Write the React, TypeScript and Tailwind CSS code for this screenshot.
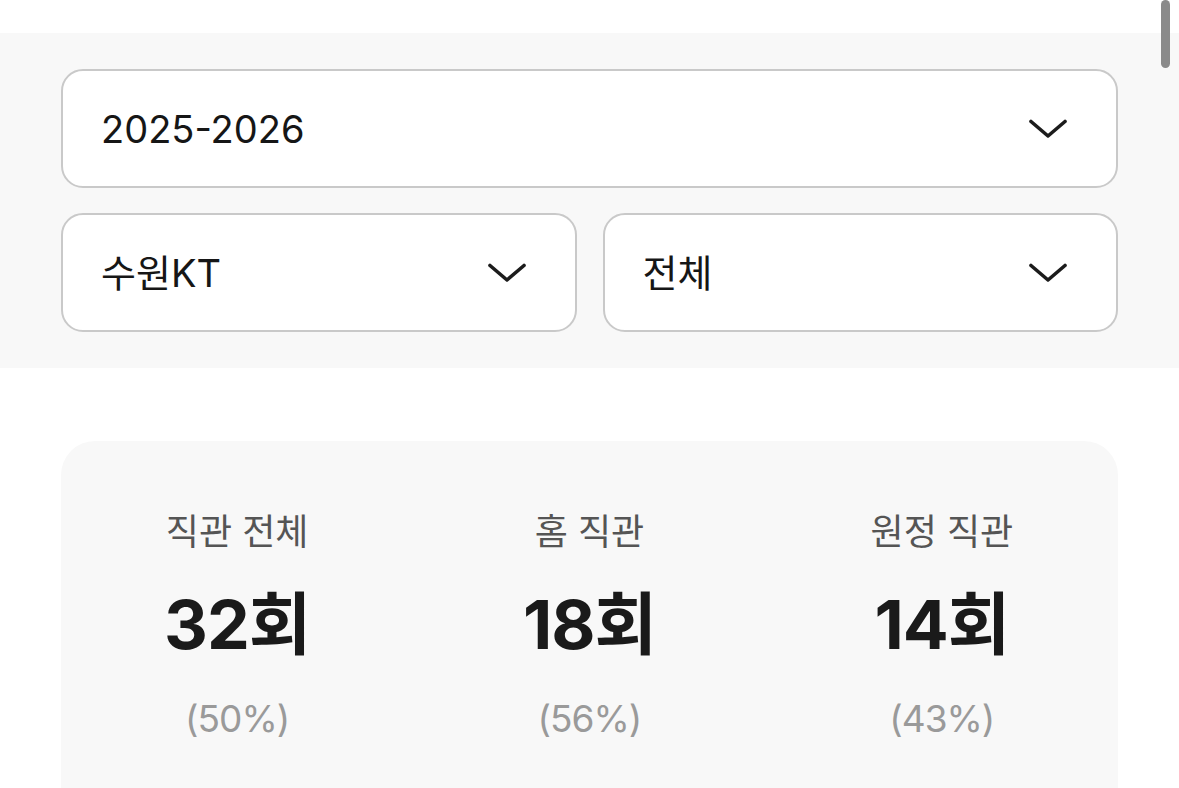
import React from "react";

const font = { fontFamily: "Inter, 'Noto Sans CJK KR', sans-serif" };

const Chevron = () => (
  <svg width="38" height="20" viewBox="0 0 38 20" fill="none" className="shrink-0">
    <path d="M2 2.5 L19 17 L36 2.5" stroke="#1c1c1c" strokeWidth="3.6" strokeLinecap="round" strokeLinejoin="round" />
  </svg>
);

const Select = ({ label }: { label: string }) => (
  <button className="flex h-[119px] w-full items-center justify-between rounded-[22px] border-2 border-[#c9c9c9] bg-white pl-[38px] pr-[49px] text-left">
    <span className="text-[38px] leading-none text-[#161616]">{label}</span>
    <Chevron />
  </button>
);

const stats = [
  { title: "직관 전체", count: "32회", pct: "(50%)" },
  { title: "홈 직관", count: "18회", pct: "(56%)" },
  { title: "원정 직관", count: "14회", pct: "(43%)" },
];

export default function App() {
  return (
    <div className="relative h-[788px] w-[1179px] overflow-hidden bg-white" style={font}>
      <div className="absolute right-[9px] top-0 h-[68px] w-[9px] rounded-full bg-[#8a8a8a]" />

      <div className="mt-[33px] flex flex-col gap-[25px] bg-[#f8f8f8] px-[61px] py-[36px]">
        <Select label="2025-2026" />
        <div className="grid grid-cols-2 gap-[26px]">
          <Select label="수원KT" />
          <Select label="전체" />
        </div>
      </div>

      <div className="mx-[61px] mt-[73px] h-[400px] rounded-t-[34px] bg-[#f8f8f8]">
        <div className="grid grid-cols-3 pt-[66px]">
          {stats.map((s) => (
            <div key={s.title} className="flex flex-col items-center">
              <div className="text-[36px] leading-[50px] text-[#555555]">{s.title}</div>
              <div className="mt-[27px] text-[68px] font-bold leading-[80px] tracking-[-1px] text-[#1a1a1a]">{s.count}</div>
              <div className="mt-[30px] text-[37px] leading-[50px] tracking-[-1px] text-[#9a9a9a]">{s.pct}</div>
            </div>
          ))}
        </div>
      </div>
    </div>
  );
}
